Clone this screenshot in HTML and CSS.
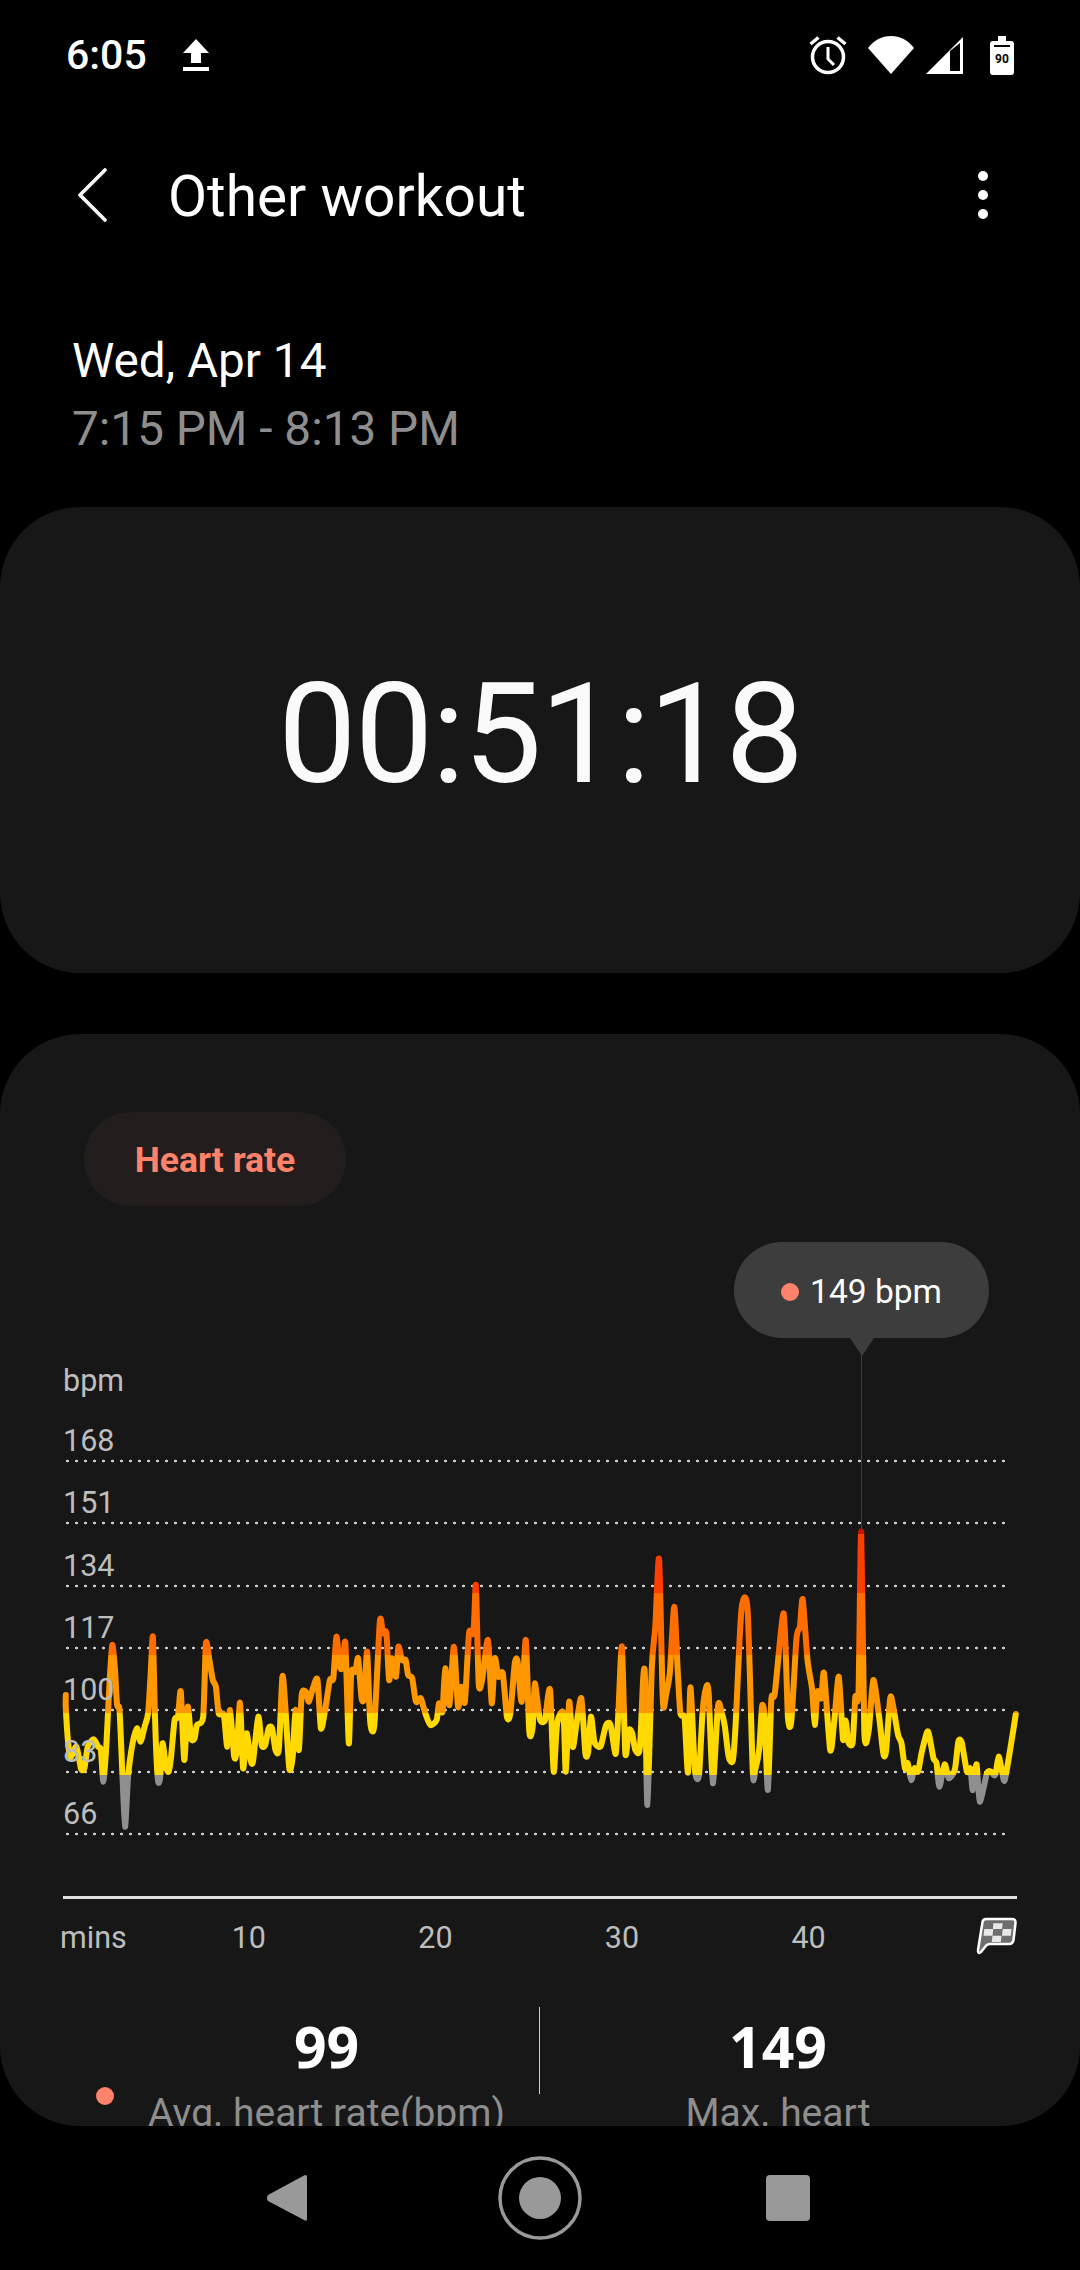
FILE: index.html
```html
<!DOCTYPE html>
<html lang="en">
<head>
  <meta charset="UTF-8" />
  <title>Other workout</title>
  <link rel="stylesheet" href="styles.css">
</head>
<body>
  <div class="status-bar">
    <span class="clock">6:05</span>
    <svg class="icon-upload" width="26" height="32" viewBox="0 0 26 32"><path d="M13 0L26 14H18V24H8V14H0Z" fill="#fff"/><rect y="28" width="26" height="4" fill="#fff"/></svg>
    <div class="status-icons">
      <svg class="icon-alarm" width="38" height="40" viewBox="0 0 38 40" fill="none" stroke="#fff"><circle cx="19" cy="22" r="15.500" stroke-width="3.500"/><path d="M19 12V24L25 30" stroke-width="3"/><path d="M1.500 9L9.500 2.500M28.500 2.500L36.500 9" stroke-width="3.500"/></svg>
      <svg class="icon-wifi" width="46" height="38" viewBox="0 0 46 38"><path d="M23 38L0 12C6 4 14 0 23 0S40 4 46 12Z" fill="#fff"/></svg>
      <svg class="icon-signal" width="37" height="37" viewBox="0 0 37 37"><path fill-rule="evenodd" d="M0 37L37 0V37ZM24 14V34H34V6Z" fill="#fff"/></svg>
      <svg class="icon-battery" width="24" height="39" viewBox="0 0 24 39"><path d="M8 0H16V5H21Q24 5 24 8V36Q24 39 21 39H3Q0 39 0 36V8Q0 5 3 5H8Z" fill="#fff"/><rect x="4" y="9" width="16" height="2" fill="#000"/><text class="batt-text" x="12" y="27" text-anchor="middle">90</text></svg>
    </div>
  </div>

  <div class="title-bar">
    <svg class="icon-back" width="30" height="54" viewBox="0 0 30 54" fill="none"><path d="M28 2L3 27L28 52" stroke="#fff" stroke-width="3.600" stroke-linecap="round" stroke-linejoin="round"/></svg>
    <h1>Other workout</h1>
    <div class="kebab"><i></i><i></i><i></i></div>
  </div>

  <div class="date-block">
    <div class="date">Wed, Apr 14</div>
    <div class="time-range">7:15 PM - 8:13 PM</div>
  </div>

  <div class="card duration-card">
    <div class="duration">00:51:18</div>
  </div>

  <div class="card hr-card">
    <div class="pill">Heart rate</div>

    <div class="plot">
      <div class="tooltip"><i class="dot"></i>149 bpm</div>
      <div class="marker"></div>

      <div class="row unit"><span>bpm</span></div>
      <div class="row line"><span>168</span></div>
      <div class="row line"><span>151</span></div>
      <div class="row line"><span>134</span></div>
      <div class="row line"><span>117</span></div>
      <div class="row line"><span>100</span></div>
      <div class="row line"><span>83</span></div>
      <div class="row line"><span>66</span></div>

      <svg class="trace" viewBox="0 0 1080 520" fill="none">
        <defs>
          <linearGradient id="zones" gradientUnits="userSpaceOnUse" x1="0" y1="0" x2="0" y2="520">
            <stop offset="0.3538" stop-color="#c81400"/>
            <stop offset="0.3538" stop-color="#ff3d00"/>
            <stop offset="0.4667" stop-color="#ff3d00"/>
            <stop offset="0.4667" stop-color="#ff6d00"/>
            <stop offset="0.5865" stop-color="#ff6d00"/>
            <stop offset="0.5865" stop-color="#ff9800"/>
            <stop offset="0.6974" stop-color="#ff9800"/>
            <stop offset="0.6974" stop-color="#ffd900"/>
            <stop offset="0.8173" stop-color="#ffd900"/>
            <stop offset="0.8173" stop-color="#8f8f8f"/>
          </linearGradient>
        </defs>
        <path id="hrLine" class="hr-line"/>
      </svg>
    </div>

    <div class="x-axis">
      <span class="mins">mins</span>
      <span class="tick">10</span>
      <span class="tick">20</span>
      <span class="tick">30</span>
      <span class="tick">40</span>
      <svg class="icon-flag" width="42" height="38" viewBox="0 0 42 38">
        <path d="M10 2H36Q40 2 39.500 6L37.500 23Q37 27 33 27H14Q11 27 9 30L5 35Q1.500 37.500 2 33L6.500 5Q7 2 10 2Z" fill="#6e6e6e" stroke="#fff" stroke-width="2.500" stroke-linejoin="round"/>
        <path d="M17.300 6.300H26.700L26 12H17L17.300 6.300ZM8.300 12H17.300L16.500 18.700H7.500ZM26.700 12H35.500L34.800 18.700H26ZM16.500 18.700H25.500L24.800 25H15.700Z" fill="#e8e8e8"/>
      </svg>
    </div>

    <div class="stats">
      <div class="stat stat-avg">
        <i class="dot"></i>
        <div class="stat-body">
          <div class="stat-value">99</div>
          <div class="stat-label">Avg. heart rate(bpm)</div>
        </div>
      </div>
      <div class="stat stat-max">
        <div class="stat-body">
          <div class="stat-value">149</div>
          <div class="stat-label">Max. heart</div>
        </div>
      </div>
    </div>
  </div>

  <div class="nav-bar">
    <svg width="42" height="48" viewBox="0 0 42 48"><path d="M38 1.500Q41 0 41 3V45Q41 48 38 46L2 27Q0 24 2 21Z" fill="#999"/></svg>
    <svg class="nav-home" width="84" height="84" viewBox="0 0 84 84"><circle cx="42" cy="42" r="40" fill="none" stroke="#999" stroke-width="3.500"/><circle cx="42" cy="42" r="21" fill="#999"/></svg>
    <div class="nav-square"></div>
  </div>

  <script src="chart.js"></script>
</body>
</html>
```

FILE: styles.css
```css
* {
  box-sizing: border-box;
}
html, body {
  margin: 0;
  padding: 0;
}
body {
  width: 1080px;
  height: 2270px;
  overflow: hidden;
  background-color: #000;
  color: #fff;
  font-family: Roboto, 'Noto Sans', sans-serif;
}

/* status bar */
.status-bar {
  height: 110px;
  display: flex;
  align-items: center;
  padding: 0 66px;
}
.clock {
  font-size: 41px;
  font-weight: 500;
}
.icon-upload {
  margin-left: 36px;
}
.status-icons {
  margin-left: auto;
  display: flex;
  align-items: center;
}
.icon-wifi {
  margin-left: 21px;
}
.icon-signal {
  margin-left: 12px;
}
.icon-battery {
  margin-left: 27px;
}
.batt-text {
  font-family: Roboto, sans-serif;
  font-size: 12px;
  font-weight: 700;
  fill: #000;
}

/* title */
.title-bar {
  height: 170px;
  display: flex;
  align-items: center;
  padding: 0 92px 0 77px;
}
.icon-back {
  margin-right: 61px;
}
.title-bar h1 {
  margin: 0;
  font-size: 56.8px;
  font-weight: 400;
  position: relative;
  top: 1px;
}
.kebab {
  margin-left: auto;
  display: flex;
  flex-direction: column;
  gap: 9px;
}
.kebab i {
  width: 10px;
  height: 10px;
  border-radius: 50%;
  background-color: #fff;
}

.date-block {
  padding: 47px 0 44px 72px;
}
.date {
  font-size: 47.7px;
  line-height: 68px;
}
.time-range {
  font-size: 47.7px;
  line-height: 68px;
  color: #8e8e8e;
}

/* cards */
.card {
  background-color: #171717;
  border-radius: 80px;
}
.duration-card {
  height: 466px;
  margin-bottom: 61px;
  display: flex;
  justify-content: center;
  padding-top: 145px;
}
.duration {
  font-size: 140px;
  line-height: 164px;
  letter-spacing: -2px;
  color: #fafafa;
}
.hr-card {
  height: 1092px;
  overflow: hidden;
  padding-top: 78px;
}
.pill {
  width: 262px;
  height: 94px;
  margin-left: 84px;
  padding-top: 2px;
  border-radius: 47px;
  background-color: #231e1d;
  color: #ff826a;
  font-size: 35.5px;
  font-weight: 700;
  display: flex;
  align-items: center;
  justify-content: center;
}

/* chart */
.plot {
  position: relative;
  margin-top: 144px;
  padding: 2px 69px 0 63px;
}
.row {
  height: 62.2px;
  display: flex;
  align-items: flex-end;
  padding-bottom: 5px;
  color: #bdbdbd;
  font-size: 30.5px;
  line-height: 34px;
}
.row span {
  position: relative;
  z-index: 2;
}
.row.unit {
  height: 49px;
  padding-bottom: 3px;
}
.row.line {
  background-image: radial-gradient(circle, #c8c8c8 1.3px, transparent 1.6px);
  background-size: 9px 4px;
  background-position: left bottom;
  background-repeat: repeat-x;
}
.trace {
  position: absolute;
  left: 0;
  top: 0;
  width: 1080px;
  height: 520px;
  z-index: 1;
}
.hr-line {
  stroke: url(#zones);
  stroke-width: 6px;
  stroke-linejoin: round;
  stroke-linecap: round;
}
.dot {
  display: block;
  width: 18px;
  height: 18px;
  border-radius: 50%;
  background-color: #ff826a;
}
.tooltip {
  position: absolute;
  left: 734px;
  top: -108px;
  width: 255px;
  height: 96px;
  padding-top: 3px;
  border-radius: 48px;
  background-color: #3d3d3d;
  display: flex;
  align-items: center;
  justify-content: center;
  gap: 11px;
  font-size: 33.5px;
}
.tooltip::after {
  content: "";
  position: absolute;
  left: 116px;
  top: 96px;
  border-left: 12px solid transparent;
  border-right: 12px solid transparent;
  border-top: 18px solid #3d3d3d;
}
.marker {
  position: absolute;
  left: 861px;
  top: 0;
  width: 1px;
  height: 182px;
  background-color: #3f3f3f;
}

.x-axis {
  margin: 60px 63px 0;
  padding-top: 2px;
  border-top: 3px solid #e0e0e0;
  height: 78px;
  display: flex;
  align-items: center;
  color: #bdbdbd;
  font-size: 30.5px;
}
.mins {
  width: 95.5px;
  margin-left: -3px;
}
.tick {
  width: 186.6px;
  text-align: center;
}
.icon-flag {
  margin-left: auto;
  margin-right: -1px;
  margin-top: -3px;
}

/* stats */
.stats {
  display: grid;
  grid-template-columns: 456px 540px;
  margin-top: 33px;
  padding-left: 84px;
}
.stat {
  display: flex;
  height: 200px;
}
.stat-avg {
  border-right: 1px solid #cfcfcf;
  height: 87px;
}
.stat-avg .dot {
  flex: none;
  margin: 80px 0 0 12px;
}
.stat-body {
  flex: 1;
  text-align: center;
}
.stat-max .stat-body {
  flex: none;
  width: 476px;
}
.stat-value {
  font-family: 'Open Sans', Roboto, sans-serif;
  font-size: 57px;
  font-weight: 700;
  line-height: 78px;
}
.stat-label {
  margin-top: 6px;
  color: #8e8e8e;
  font-size: 39px;
  line-height: 44px;
  white-space: nowrap;
}

/* nav */
.nav-bar {
  height: 144px;
  display: flex;
  align-items: center;
  padding-left: 266px;
}
.nav-home {
  margin-left: 190px;
}
.nav-square {
  margin-left: 184px;
  width: 44px;
  height: 46px;
  border-radius: 4px;
  background-color: #999;
}
```

FILE: chart.js
```js
// traced from the chart, x/y are in plot pixels
const SX = 1 / 2.904;
const SY = 1 / 3;

const LEFT = [191,1035,191,1075,198,1180,205,1222,222,1190,235,1255,245,1255,255,1190,272,1168,285,1190,293,1200,300,1295,308,1200,318,1000,326,885,334,960,340,1065,347,1080,355,1260,363,1430,372,1280,385,1180,398,1135,408,1175,420,1130,430,1090,437,980,444,860,450,1100,458,1285,465,1285,472,1180,482,1250,490,1265,497,1220,507,1110,517,1100,525,1025,535,1230,545,1070,555,1165,565,1165,572,1125,590,1100,598,880,608,930,618,990,627,1010,635,1090,650,1095,660,1190,668,1080,680,1220,688,1200,697,1058,706,1255,716,1150,728,1232,735,1232,750,1100,760,1185,770,1185,780,1135,790,1135,800,1200,810,1195,820,980,828,1060,840,1255,850,1220,858,1080,868,1200,876,1035,888,1025,897,1055,910,1010,922,990,932,1135,945,1075,958,990,968,985,977,860,987,950,995,950,1003,880,1013,1180,1020,970,1032,965,1040,925,1050,1045,1058,1040,1066,905,1075,1115,1087,1125,1103,815,1112,850,1122,850,1130,990,1138,925,1150,980,1157,890,1167,930,1178,930,1185,975,1197,985,1208,1055,1222,1045,1235,1090,1250,1125,1268,1110,1275,1060,1285,1085,1293,955,1305,1065,1318,890,1330,1070,1340,1010,1350,1055,1362,850,1375,848,1382,706,1390,1000,1400,990,1417,870,1428,1060,1437,925,1447,980,1460,970,1472,1100,1482,1090,1495,940,1503,935,1515,1055,1527,870,1537,1145,1547,1130,1553,1000];

const RIGHT = [0,1108,15,1110,22,1050,30,1025,40,1265,50,1120,68,1090,75,1265,85,1055,95,1190,105,1130,120,1045,132,1210,140,1205,148,1100,158,1175,170,1190,178,1185,192,1125,205,1125,220,1212,228,1080,238,890,248,1210,258,1140,268,1150,277,1200,290,1195,300,980,305,985,312,1365,325,950,335,830,346,628,357,1055,367,1030,377,970,390,770,400,960,408,1090,420,1105,430,1268,437,1012,450,1260,462,1275,472,1090,483,1012,490,1030,502,1300,517,1068,527,1085,537,1130,548,1220,560,1232,568,1130,585,780,603,780,618,1265,625,1260,637,1195,645,1068,652,1100,662,1320,672,1050,682,1030,708,790,720,1100,730,1112,745,865,755,830,763,748,777,930,790,1015,798,1125,806,1025,817,1045,825,970,843,1200,855,1110,868,980,880,1168,888,1112,895,1175,908,1178,916,1040,925,1030,933,545,942,1145,955,1140,968,990,985,1100,997,1210,1005,1205,1017,1045,1025,1065,1040,1155,1050,1180,1060,1255,1068,1240,1078,1290,1088,1255,1098,1265,1108,1210,1125,1145,1132,1165,1143,1225,1152,1240,1160,1310,1175,1243,1187,1285,1205,1258,1215,1175,1225,1178,1240,1265,1250,1255,1257,1320,1268,1243,1277,1355,1298,1270,1310,1265,1322,1275,1332,1220,1342,1265,1350,1290,1370,1170,1382,1092];

function toPoints(list, offset) {
  const pts = [];
  for (let i = 0; i < list.length; i += 2) {
    pts.push([(list[i] + offset) * SX, list[i + 1] * SY]);
  }
  return pts;
}

// catmull-rom through the points, tension kept low so peaks don't overshoot
function smoothPath(pts) {
  const k = 0.12;
  let d = `M${pts[0][0].toFixed(1)} ${pts[0][1].toFixed(1)}`;
  for (let i = 0; i < pts.length - 1; i++) {
    const p0 = pts[Math.max(i - 1, 0)];
    const p1 = pts[i];
    const p2 = pts[i + 1];
    const p3 = pts[Math.min(i + 2, pts.length - 1)];
    const c1x = p1[0] + (p2[0] - p0[0]) * k;
    const c1y = p1[1] + (p2[1] - p0[1]) * k;
    const c2x = p2[0] - (p3[0] - p1[0]) * k;
    const c2y = p2[1] - (p3[1] - p1[1]) * k;
    d += `C${c1x.toFixed(1)} ${c1y.toFixed(1)} ${c2x.toFixed(1)} ${c2y.toFixed(1)} ${p2[0].toFixed(1)} ${p2[1].toFixed(1)}`;
  }
  return d;
}

const points = toPoints(LEFT, 0).concat(toPoints(RIGHT, 1568));
document.getElementById('hrLine').setAttribute('d', smoothPath(points));
```
